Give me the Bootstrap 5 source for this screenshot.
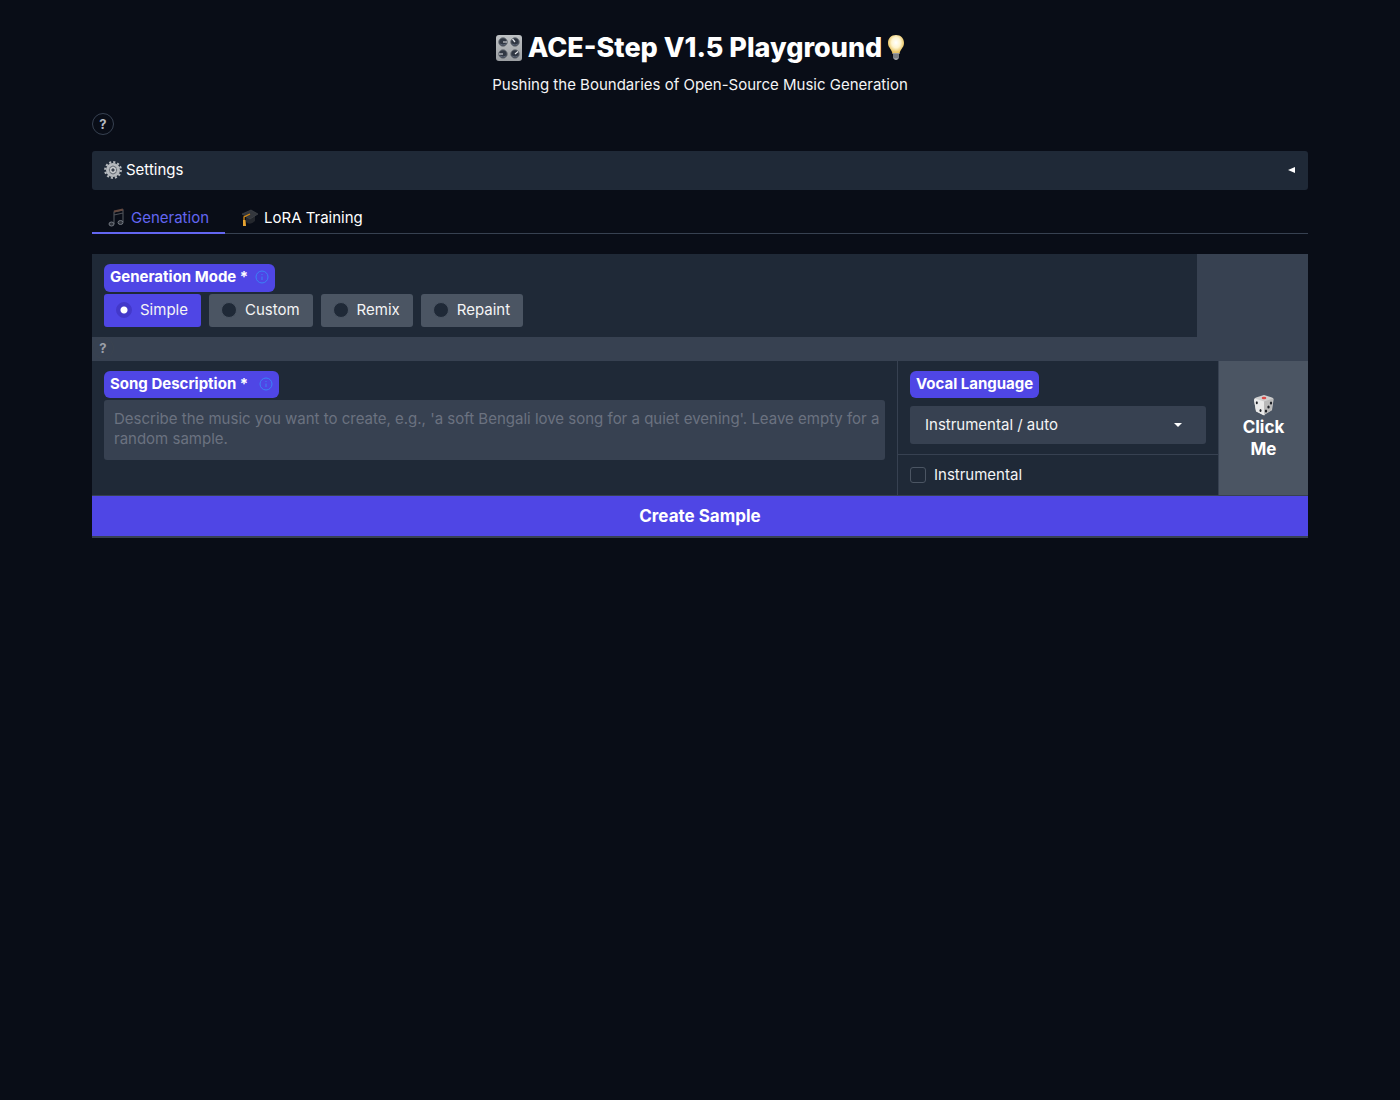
<!DOCTYPE html>
<html lang="en" data-bs-theme="dark">
<head>
<meta charset="utf-8">
<meta name="viewport" content="width=device-width, initial-scale=1">
<title>ACE-Step V1.5 Playground</title>
<link href="https://cdn.jsdelivr.net/npm/bootstrap@5.3.0/dist/css/bootstrap.min.css" rel="stylesheet">
<style>
:root { --panel: #1f2937; --line: #374151; --raised: #4b5563; --accent: #4f46e5; }
body { background: #090d17; color: #f4f4f5; font-family: Inter, "Noto Sans", sans-serif; font-size: 15px; line-height: 20px; }
.page { max-width: 1280px; padding: 30px 32px; }
.page-title { font-size: 27px; line-height: 36px; font-weight: 800; gap: 5px; }
.page-title svg { flex: none; }
.page-lead { margin: 9px 0 18px; }
.help-btn { width: 22px; height: 22px; border: 1px solid var(--line); border-radius: 50%; background: none; color: #b4b8c0; font-size: 13px; font-weight: 700; line-height: 18px; }
.settings-btn { background: var(--panel); color: #fff; border: 0; border-radius: 3px; padding: 9px 12px 10px; gap: 4px; margin-top: 16px; }
.page-tabs { margin: 11px 0 20px; border-bottom: 1px solid #374151; }
.page-tabs .nav-link { padding: 7px 16px 4px; border: 0; border-bottom: 2px solid transparent; border-radius: 0; color: #fff; background: none; gap: 5px; margin-bottom: -1px; }
.page-tabs .nav-link.active { color: #6366f1; background: none; border-color: #6366f1; }
.board { background: var(--line); padding-bottom: 2px; }
.pane { background: var(--panel); padding: 10px 12px; }
.mode-rest { flex: 0 0 9.1%; }
.tag-label { background: var(--accent); color: #fff; border-radius: 6px; padding: 3px 6px 4px; font-size: 15px; font-weight: 700; gap: 7px; margin: 0 0 2px; width: fit-content; }
.mode-pane .tag-label { padding-bottom: 5px; }
.choice { background: var(--raised); border-radius: 3px; padding: 6px 13px 7px 12px; gap: 8px; }
.choice input { appearance: none; width: 16px; height: 16px; margin: 0; border: 1px solid var(--raised); border-radius: 50%; background: var(--panel); }
.choice:has(input:checked) { background: var(--accent); }
.choice input:checked { border-color: #4338ca; background: radial-gradient(circle, #fff 3px, #4338ca 4px); }
.help-row { height: 24px; }
.help-row .help-btn { border-color: #3a4350; color: #9a9fa8; }
.inputs-row { gap: 1px; margin-bottom: 1px; }
.vocal-col { flex: 0 0 320px; gap: 1px; }
.prompt-box { height: 60px; resize: none; overflow: hidden; background: var(--line); border: 0; border-radius: 3px; padding: 9px 2px 9px 10px; font-size: 15px; line-height: 20px; }
.prompt-box::placeholder { color: #6b7280; }
.language-select { height: 38px; margin-top: 8px; border: 0; border-radius: 3px; color: #f4f4f5; font-size: 15px; line-height: 20px; padding: 9px 36px 9px 15px; background: var(--line) url("data:image/svg+xml,%3Csvg xmlns='http://www.w3.org/2000/svg' viewBox='0 0 8 4'%3E%3Cpath d='M0 0h8L4 4z' fill='white'/%3E%3C/svg%3E") no-repeat right 24px center / 8px 4px; }
.vocal-col .tag-label { margin-bottom: 0; }
.check-box { appearance: none; width: 16px; height: 16px; margin: 0; border: 1px solid var(--raised); border-radius: 3px; background: var(--panel); }
.check-box:checked { background: var(--accent); }
.sample-btn { flex: 0 0 89px; border: 0; background: var(--raised); color: #fff; font-size: 17px; font-weight: 700; line-height: 22px; padding: 0 0 3px; }
.create-btn { border: 0; background: var(--accent); color: #fff; font-size: 17px; font-weight: 700; line-height: 20px; padding: 10px 12px; }
</style>
</head>
<body>
<main class="page mx-auto">
  <header class="text-center">
    <h1 class="page-title d-flex justify-content-center align-items-center m-0">
      <svg width="28" height="28" viewBox="0 0 28 28" aria-hidden="true">
        <defs><linearGradient id="plate" x2="0" y2="1"><stop stop-color="#bfc2c5"/><stop offset="1" stop-color="#9b9ea2"/></linearGradient></defs>
        <rect x="1" y="1" width="26" height="26" rx="3" fill="url(#plate)"/>
        <g fill="#303743" stroke="#747980"><circle cx="8" cy="8" r="4.300"/><circle cx="20" cy="8" r="4.300"/><circle cx="8" cy="20" r="4.300"/><circle cx="20" cy="20" r="4.300"/></g>
        <path d="M8 8h4M20 8l-2.500-3M8 20H4M20 20l3-2.500" stroke="#e5e7eb" stroke-width="1.200"/>
        <path d="M5 10q3 2 6 0M17 10q3 2 6 0M5 22q3 2 6 0M17 22q3 2 6 0" stroke="#596273" fill="none"/>
      </svg>
      <span>ACE-Step V1.5 Playground</span>
      <svg width="18" height="28" viewBox="0 0 18 28" aria-hidden="true">
        <defs><radialGradient id="glow" cy=".4"><stop stop-color="#fff"/><stop offset=".55" stop-color="#fff5cf"/><stop offset="1" stop-color="#e9c465"/></radialGradient></defs>
        <path d="M9 1C4 1 1 4.500 1 9c0 5 4 6 4.500 11h7C13 15 17 14 17 9c0-4.500-3-8-8-8z" fill="url(#glow)"/>
        <path d="M6 19h6v5l-2 2H8l-2-2z" fill="#999b9e"/><path d="M6 21h6M6 23h6" stroke="#5d6065"/>
      </svg>
    </h1>
    <p class="page-lead">Pushing the Boundaries of Open-Source Music Generation</p>
  </header>
  <button type="button" class="help-btn d-block p-0" aria-label="Help">?</button>
  <button type="button" class="settings-btn d-flex align-items-center w-100" aria-expanded="false">
    <svg width="18" height="18" viewBox="0 0 18 18" aria-hidden="true">
      <circle cx="9" cy="9" r="7.800" fill="none" stroke="#b5b9bd" stroke-width="2.200" stroke-dasharray="2.100 1.984"/>
      <circle cx="9" cy="9" r="5.600" fill="#6d737a" stroke="#b5b9bd" stroke-width="2.800"/>
      <path d="M9 4v10M5 7l8 4M5 11l8-4" stroke="#8f949b"/>
      <circle cx="9" cy="9" r="2.300" fill="#3a424e" stroke="#d5d7d9" stroke-width="1.200"/>
    </svg>
    <span>Settings</span>
    <svg class="ms-auto" width="8" height="8" viewBox="0 0 8 8" aria-hidden="true"><path d="M7 1v6L0 4z" fill="#fff"/></svg>
  </button>
  <div class="page-tabs nav" role="tablist">
    <button type="button" class="nav-link active d-flex align-items-center" role="tab" aria-selected="true">
      <svg width="18" height="20" viewBox="0 0 18 20" aria-hidden="true"><path d="M6 16V4l9-2v12M6 7l9-2" fill="none" stroke="#4c5057" stroke-width="1.200"/><path d="M6 3.500l9-2" stroke="#63483f" stroke-width="2"/><ellipse cx="3.500" cy="16" rx="2.500" ry="2" fill="#30343c" stroke="#747982"/><ellipse cx="12.500" cy="14.500" rx="2.500" ry="2" fill="#30343c" stroke="#747982"/></svg>
      Generation
    </button>
    <button type="button" class="nav-link d-flex align-items-center" role="tab" aria-selected="false">
      <svg width="18" height="20" viewBox="0 0 18 20" aria-hidden="true"><path d="M5 8v6q4 4 9-1V7z" fill="#24272d"/><path d="M1 6l9-4 7 4-8 5z" fill="#34373d" stroke="#484b51" stroke-width=".6"/><path d="M9 6L3 9v4" fill="none" stroke="#d38a17" stroke-width="1.300"/><path d="M2 12h2.500l.5 6H2z" fill="#e7a331"/></svg>
      LoRA Training
    </button>
  </div>

  <form class="board">
    <div class="d-flex">
      <div class="pane mode-pane flex-fill" role="radiogroup" aria-labelledby="mode-label">
        <div id="mode-label" class="tag-label d-flex align-items-center">Generation Mode *
          <svg width="14" height="14" viewBox="0 0 14 14" fill="none" stroke="#3b82f6" aria-hidden="true"><circle cx="7" cy="7" r="6"/><path d="M7 6.500v3.500M7 4v1"/></svg>
        </div>
        <div class="d-flex flex-wrap gap-2">
          <label class="choice d-flex align-items-center"><input type="radio" name="mode" checked>Simple</label>
          <label class="choice d-flex align-items-center"><input type="radio" name="mode">Custom</label>
          <label class="choice d-flex align-items-center"><input type="radio" name="mode">Remix</label>
          <label class="choice d-flex align-items-center"><input type="radio" name="mode">Repaint</label>
        </div>
      </div>
      <div class="mode-rest"></div>
    </div>
    <div class="help-row"><button type="button" class="help-btn d-block p-0" aria-label="Mode help">?</button></div>
    <div class="inputs-row d-flex">
      <div class="pane flex-fill">
        <label for="description" class="tag-label d-flex align-items-center">Song Description *
          <svg class="ms-1" width="14" height="14" viewBox="0 0 14 14" fill="none" stroke="#3b82f6" aria-hidden="true"><circle cx="7" cy="7" r="6"/><path d="M7 6.500v3.500M7 4v1"/></svg>
        </label>
        <textarea id="description" class="prompt-box form-control" placeholder="Describe the music you want to create, e.g., 'a soft Bengali love song for a quiet evening'. Leave empty for a random sample."></textarea>
      </div>
      <div class="vocal-col d-flex flex-column">
        <div class="pane">
          <label for="language" class="tag-label d-flex">Vocal Language</label>
          <select id="language" class="language-select form-select"><option>Instrumental / auto</option></select>
        </div>
        <div class="pane flex-fill">
          <label class="d-flex align-items-center gap-2"><input type="checkbox" class="check-box">Instrumental</label>
        </div>
      </div>
      <button type="button" class="sample-btn d-flex flex-column align-items-center justify-content-center">
        <svg width="22" height="22" viewBox="0 0 22 22" aria-hidden="true">
          <path d="M11 1l8 2.500q2 .5 1.500 2.500L19 16l-8.500 5L3 17 1 6q0-2 2-2.500z" fill="#cfcfcf"/>
          <path d="M2 4.500L11 7.500l1 13.500q-1 .5-2 0L3 17.500 1 6z" fill="#e9e9e9"/><path d="M11 7.500l9-3-1.500 12L11 21z" fill="#b9b9b9"/>
          <ellipse cx="11" cy="4" rx="2.300" ry="1.200" fill="#dc4a48"/>
          <g fill="#202329"><ellipse cx="3.800" cy="8.800" rx="1" ry="1.500"/><ellipse cx="7.500" cy="16.500" rx="1" ry="1.500"/><ellipse cx="18" cy="9" rx="1.200" ry="1.600"/><ellipse cx="15.500" cy="13" rx="1.200" ry="1.600"/><ellipse cx="13" cy="17" rx="1.200" ry="1.600"/></g>
        </svg>
        <span>Click<br>Me</span>
      </button>
    </div>
    <button type="button" class="create-btn d-block w-100">Create Sample</button>
  </form>
</main>
<script src="https://cdn.jsdelivr.net/npm/bootstrap@5.3.0/dist/js/bootstrap.bundle.min.js"></script>
</body>
</html>
